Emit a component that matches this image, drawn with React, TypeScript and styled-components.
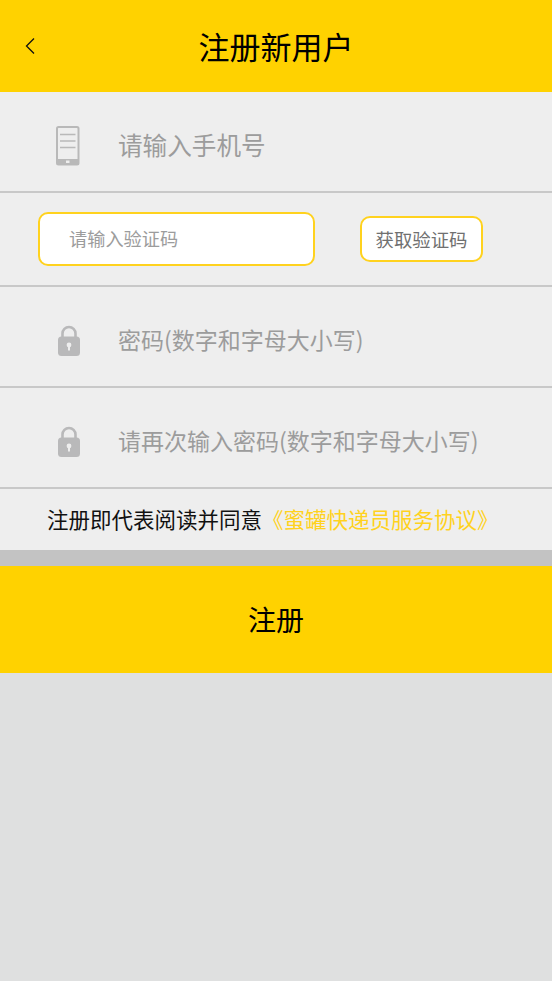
import styled, { createGlobalStyle } from 'styled-components';

const GlobalStyle = createGlobalStyle`
  html, body {
    margin: 0;
    padding: 0;
    background: #dfe0e0;
  }
  body {
    font-family: "Noto Sans CJK SC", "Noto Sans", sans-serif;
  }
`;

function PhoneIcon() {
  return (
    <svg width="24" height="40" viewBox="0 0 24 40">
      <rect x="1" y="1" width="21.5" height="37.5" rx="1.5" fill="none" stroke="#b9b9b9" strokeWidth="2" />
      <rect x="1" y="33" width="21.5" height="5.5" fill="#b9b9b9" />
      <rect x="10" y="34.5" width="3.5" height="2.5" fill="#eee" />
      <path d="M4 8.5h15.5M4 15h15.5M4 21.5h15.5" stroke="#b9b9b9" strokeWidth="1.6" />
    </svg>
  );
}

function LockIcon() {
  return (
    <svg width="24" height="32" viewBox="-1 0 24 32">
      <path d="M5.5 13V8.5a6.5 6.5 0 0 1 13 0V13" fill="none" stroke="#b9b9ba" strokeWidth="2.6" />
      <rect x="1" y="11.5" width="22" height="19.5" rx="3.5" fill="#b9b9ba" />
      <circle cx="12" cy="20" r="2.4" fill="#eee" />
      <rect x="11" y="20" width="2" height="5.5" fill="#eee" />
    </svg>
  );
}

export default function App() {
  return (
    <Page>
      <GlobalStyle />
      <Header>
        <BackButton aria-label="返回">
          <svg width="12" height="18" viewBox="0 0 12 18">
            <path d="M10 1.5 2.5 9l7.5 7.5" fill="none" stroke="#111" strokeWidth="1.3" />
          </svg>
        </BackButton>
        <Title>注册新用户</Title>
      </Header>
      <Form>
        <FieldRow>
          <IconSlot>
            <PhoneIcon />
          </IconSlot>
          <FieldText $size={24.6}>请输入手机号</FieldText>
        </FieldRow>
        <CodeRow>
          <CodeInput>请输入验证码</CodeInput>
          <CodeButton>获取验证码</CodeButton>
        </CodeRow>
        <FieldRow>
          <IconSlot>
            <LockIcon />
          </IconSlot>
          <FieldText $size={23}>密码(数字和字母大小写)</FieldText>
        </FieldRow>
        <FieldRow>
          <IconSlot>
            <LockIcon />
          </IconSlot>
          <FieldText $size={23}>请再次输入密码(数字和字母大小写)</FieldText>
        </FieldRow>
        <Agreement>
          注册即代表阅读并同意<AgreementLink>《蜜罐快递员服务协议》</AgreementLink>
        </Agreement>
      </Form>
      <Spacer />
      <SubmitButton>注册</SubmitButton>
    </Page>
  );
}

const Page = styled.div`
  width: 552px;
  height: 981px;
  overflow: hidden;
  background: #dfe0e0;
`;

const Header = styled.header`
  height: 92px;
  position: relative;
  display: flex;
  align-items: center;
  justify-content: center;
  background: #ffd200;
`;

const BackButton = styled.div`
  position: absolute;
  left: 24px;
  top: 37px;
  line-height: 0;
`;

const Title = styled.h1`
  margin: 0 0 2px;
  font-size: 31px;
  font-weight: 400;
  color: #000;
`;

const Form = styled.section`
  display: flex;
  flex-direction: column;
  background: #eeeeee;
`;

const FieldRow = styled.div`
  height: 99px;
  box-sizing: content-box;
  display: flex;
  align-items: center;
  padding-left: 56px;
  border-bottom: 2px solid #c8c8c8;
`;

const IconSlot = styled.div`
  width: 62px;
  margin-top: 8px;
  line-height: 0;
`;

const FieldText = styled.span<{ $size: number }>`
  margin-top: 4px;
  font-size: ${({ $size }) => $size}px;
  color: #9c9c9c;
`;

const CodeRow = styled.div`
  height: 92px;
  box-sizing: content-box;
  display: flex;
  align-items: center;
  padding-left: 38px;
  border-bottom: 2px solid #c8c8c8;
`;

const CodeInput = styled.div`
  width: 277px;
  height: 54px;
  box-sizing: border-box;
  display: flex;
  align-items: center;
  padding-left: 29px;
  padding-bottom: 2px;
  background: #fff;
  border: 2px solid #ffd21e;
  border-radius: 10px;
  font-size: 18.2px;
  color: #9c9c9c;
`;

const CodeButton = styled.div`
  width: 123px;
  height: 46px;
  box-sizing: border-box;
  margin-left: 45px;
  display: flex;
  align-items: center;
  justify-content: center;
  background: #fff;
  border: 2px solid #ffd21e;
  border-radius: 10px;
  font-size: 18.4px;
  color: #707070;
`;

const Agreement = styled.p`
  height: 59px;
  margin: 0;
  padding: 0 0 2px 47px;
  display: flex;
  align-items: center;
  font-size: 21.5px;
  color: #111;
  white-space: nowrap;
`;

const AgreementLink = styled.span`
  color: #ffd21e;
`;

const Spacer = styled.div`
  height: 16px;
  background: #c3c3c3;
`;

const SubmitButton = styled.div`
  height: 105px;
  padding-bottom: 2px;
  display: flex;
  align-items: center;
  justify-content: center;
  background: #ffd200;
  font-size: 28px;
  color: #000;
`;
